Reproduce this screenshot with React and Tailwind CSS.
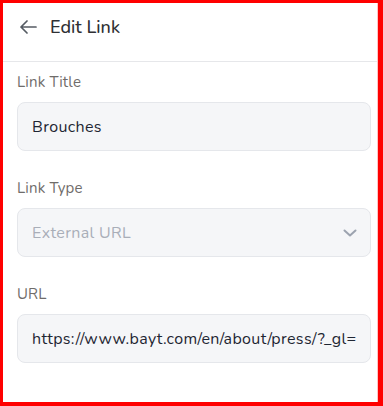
import React from "react";

export default function App() {
  const font = { fontFamily: "Nunito, Lato, 'Noto Sans', sans-serif" };
  return (
    <div
      className="w-[383px] h-[406px] bg-white border-t-[3px] border-l-[3px] border-r-[5px] border-b-[4px] border-[#ff0000] overflow-hidden"
      style={font}
    >
      <div className="h-full border-r border-[#ffc4c4]">
        <div className="flex items-center pt-[10px] pb-[20px] pl-[17px] border-b border-[#e6e7ea]">
          <svg width="17" height="14" viewBox="0 0 17 14" className="shrink-0">
            <path
              d="M1 7H16M7 1L1 7L7 13"
              fill="none"
              stroke="#555b63"
              strokeWidth="1.7"
              strokeLinecap="round"
              strokeLinejoin="round"
            />
          </svg>
          <span className="ml-[13px] text-[18px] leading-7 font-medium text-[#2f3033]">
            Edit Link
          </span>
        </div>

        <div className="pl-[14px] pr-[6px] pt-[10px] flex flex-col gap-[27px]">
          <div>
            <div className="text-[15px] tracking-[0.2px] leading-5 text-[#6f6c6a] mb-[10px]">Link Title</div>
            <div className="h-[49px] rounded-[8px] border border-[#e5e7eb] bg-[#f5f6f8] flex items-center px-[14px]">
              <span className="text-[16px] tracking-[0.35px] text-[#1f2633]">Brouches</span>
            </div>
          </div>

          <div>
            <div className="text-[15px] tracking-[0.2px] leading-5 text-[#6f6c6a] mb-[10px]">Link Type</div>
            <div className="h-[49px] rounded-[8px] border border-[#e5e7eb] bg-[#f5f6f8] flex items-center justify-between pl-[14px] pr-[13px]">
              <span className="text-[16px] tracking-[0.35px] text-[#a9aeb8]">External URL</span>
              <svg width="14" height="8" viewBox="0 0 14 8">
                <path
                  d="M1.5 1.5L7 6.5L12.5 1.5"
                  fill="none"
                  stroke="#9ca3af"
                  strokeWidth="2"
                  strokeLinecap="round"
                  strokeLinejoin="round"
                />
              </svg>
            </div>
          </div>

          <div>
            <div className="text-[15px] tracking-[0.2px] leading-5 text-[#6f6c6a] mb-[10px]">URL</div>
            <div className="h-[49px] rounded-[8px] border border-[#e5e7eb] bg-[#f5f6f8] flex items-center px-[14px]">
              <div className="overflow-hidden whitespace-nowrap w-full">
                <span className="text-[16px] tracking-[0.35px] text-[#1f2633]">
                  https://www.bayt.com/en/about/press/?_gl=
                </span>
              </div>
            </div>
          </div>
        </div>
      </div>
    </div>
  );
}
